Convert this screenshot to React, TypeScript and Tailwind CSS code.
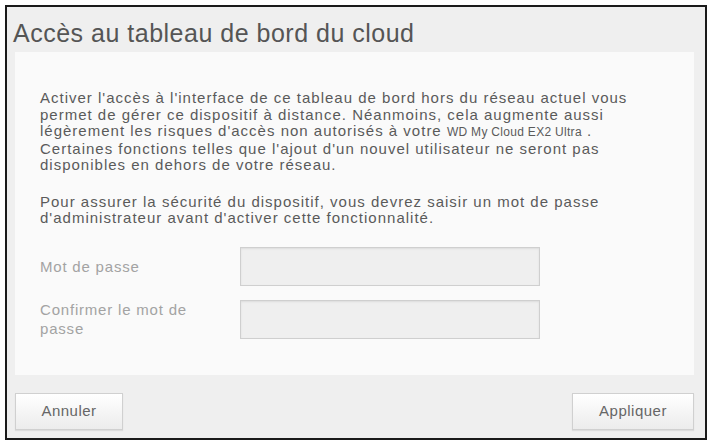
import React from "react";

export default function App() {
  const font = { fontFamily: '"Liberation Sans", Arial, sans-serif' };
  return (
    <div className="w-[712px] h-[445px] bg-white p-[5px]" style={font}>
      <div className="h-full border-2 border-[#1a1a1a] bg-[#efefef] flex flex-col">
        <div className="h-[45px] pl-[6px] pt-[13px] text-[25px] leading-[26px] tracking-[0.5px] text-[#555555]">
          Accès au tableau de bord du cloud
        </div>
        <div className="ml-[8px] mr-[11px] h-[323px] bg-[#fafafa] pl-[25px] pr-[10px] pt-[38px]">
          <p className="text-[15px] leading-[16.5px] text-[#5a5a5a] tracking-[1px] whitespace-nowrap">
            Activer l'accès à l'interface de ce tableau de bord hors du réseau actuel vous
            <br />
            permet de gérer ce dispositif à distance. Néanmoins, cela augmente aussi
            <br />
            légèrement les risques d'accès non autorisés à votre{" "}
            <span className="text-[12px] tracking-[0.3px]">WD My Cloud EX2 Ultra</span> .
            <br />
            Certaines fonctions telles que l'ajout d'un nouvel utilisateur ne seront pas
            <br />
            disponibles en dehors de votre réseau.
          </p>
          <p className="mt-[20px] text-[15px] leading-[16.5px] text-[#5a5a5a] tracking-[1px] whitespace-nowrap">
            Pour assurer la sécurité du dispositif, vous devrez saisir un mot de passe
            <br />
            d'administrateur avant d'activer cette fonctionnalité.
          </p>
          <div className="mt-[20px] flex flex-col gap-[14px]">
            <div className="flex items-center">
              <div className="w-[200px] text-[15px] leading-[17px] tracking-[0.8px] text-[#a3a3a3]">Mot de passe</div>
              <div className="w-[300px] h-[39px] bg-[#efefef] border border-[#cfcfcf] shadow-[inset_0_1px_2px_rgba(0,0,0,0.08)]" />
            </div>
            <div className="flex items-center">
              <div className="w-[200px] pr-[40px] text-[15px] leading-[19px] tracking-[0.8px] text-[#a3a3a3]">
                Confirmer le mot de passe
              </div>
              <div className="w-[300px] h-[39px] bg-[#efefef] border border-[#cfcfcf] shadow-[inset_0_1px_2px_rgba(0,0,0,0.08)]" />
            </div>
          </div>
        </div>
        <div className="flex justify-between ml-[8px] mr-[11px] mt-[18px]">
          <button className="w-[108px] h-[37px] border border-[#d0d0d0] bg-gradient-to-b from-[#ffffff] to-[#ececec] text-[15px] tracking-[0.5px] text-[#666666] shadow-[0_1px_1px_rgba(0,0,0,0.08)]">
            Annuler
          </button>
          <button className="w-[122px] h-[37px] border border-[#d0d0d0] bg-gradient-to-b from-[#ffffff] to-[#ececec] text-[15px] tracking-[0.5px] text-[#666666] shadow-[0_1px_1px_rgba(0,0,0,0.08)]">
            Appliquer
          </button>
        </div>
      </div>
    </div>
  );
}
